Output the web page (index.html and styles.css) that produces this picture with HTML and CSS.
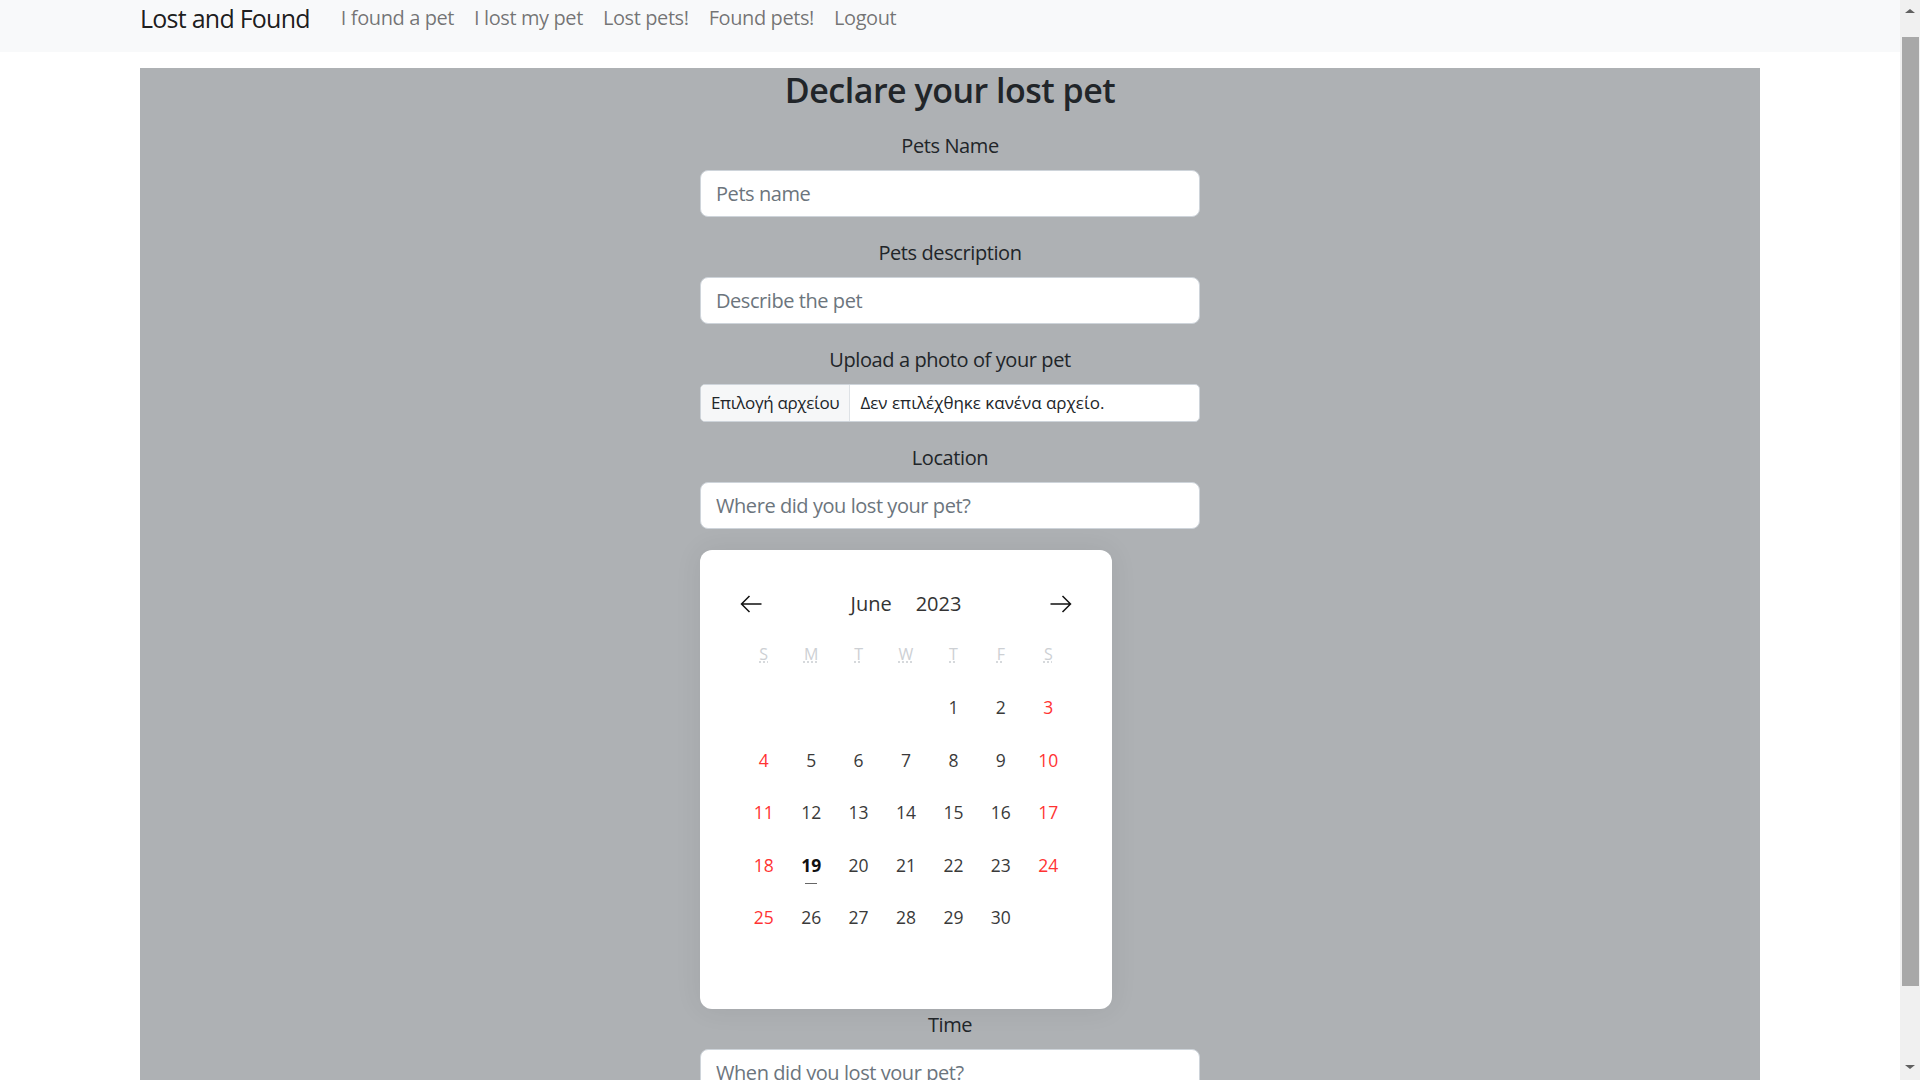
FILE: index.html
```html
<!DOCTYPE html>
<html lang="en">
<head>
<meta charset="utf-8">
<title>Lost and Found</title>
<link rel="stylesheet" href="styles.css">
</head>
<body>
<nav class="navbar">
  <a class="brand" href="#">Lost and Found</a>
  <div class="nav-links">
    <a class="nav-link" href="#">I found a pet</a>
    <a class="nav-link" href="#">I lost my pet</a>
    <a class="nav-link" href="#">Lost pets!</a>
    <a class="nav-link" href="#">Found pets!</a>
    <a class="nav-link" href="#">Logout</a>
  </div>
</nav>

<main class="main">
  <h2 class="title">Declare your lost pet</h2>
  <form class="form">
    <div class="group">
      <label class="label">Pets Name</label>
      <input class="control" type="text" placeholder="Pets name">
    </div>
    <div class="group">
      <label class="label">Pets description</label>
      <input class="control" type="text" placeholder="Describe the pet">
    </div>
    <div class="group">
      <label class="label">Upload a photo of your pet</label>
      <div class="file">
        <span class="file-btn">Επιλογή αρχείου</span>
        <span class="file-name">Δεν επιλέχθηκε κανένα αρχείο.</span>
      </div>
    </div>
    <div class="group">
      <label class="label">Location</label>
      <input class="control" type="text" placeholder="Where did you lost your pet?">
    </div>
    <div class="group group-cal">
      <div class="calendar">
        <div class="cal-head">
          <svg class="cal-arrow" width="22" height="18" viewBox="0 0 22 18"><path d="M21.5 9H1.5M9.5 1L1.5 9L9.5 17" fill="none" stroke="#111" stroke-width="1.5"/></svg>
          <div class="cal-title"><span>June</span><span>2023</span></div>
          <svg class="cal-arrow" width="22" height="18" viewBox="0 0 22 18"><path d="M0.5 9H20.5M12.5 1L20.5 9L12.5 17" fill="none" stroke="#111" stroke-width="1.5"/></svg>
        </div>
        <div class="cal-week">
          <abbr title="Sunday">S</abbr><abbr title="Monday">M</abbr><abbr title="Tuesday">T</abbr><abbr title="Wednesday">W</abbr><abbr title="Thursday">T</abbr><abbr title="Friday">F</abbr><abbr title="Saturday">S</abbr>
        </div>
        <div class="cal-days">
          <span></span><span></span><span></span><span></span>
          <span>1</span><span>2</span><span class="we">3</span>
          <span class="we">4</span><span>5</span><span>6</span><span>7</span><span>8</span><span>9</span><span class="we">10</span>
          <span class="we">11</span><span>12</span><span>13</span><span>14</span><span>15</span><span>16</span><span class="we">17</span>
          <span class="we">18</span><span class="today">19</span><span>20</span><span>21</span><span>22</span><span>23</span><span class="we">24</span>
          <span class="we">25</span><span>26</span><span>27</span><span>28</span><span>29</span><span>30</span><span></span>
        </div>
      </div>
    </div>
    <div class="group">
      <label class="label">Time</label>
      <input class="control" type="text" placeholder="When did you lost your pet?">
    </div>
  </form>
</main>

<div class="scrollbar" aria-hidden="true">
  <span class="sb-up"></span>
  <span class="sb-thumb"></span>
  <span class="sb-down"></span>
</div>
</body>
</html>
```
FILE: styles.css
```css
body {
  margin: 0;
  min-height: 1168px;
  font-family: "Open Sans", "Noto Sans", "DejaVu Sans", sans-serif;
  letter-spacing: -0.025em;
  color: #212529;
  background: #fff;
}

a {
  text-decoration: none;
}

.navbar {
  display: flex;
  align-items: flex-start;
  height: 52px;
  padding-top: 1px;
  box-sizing: border-box;
  padding-left: 140px;
  background: #f8f9fa;
}
.brand {
  font-size: 25px;
  line-height: 34px;
  margin-right: 21px;
  letter-spacing: -0.03em;
  color: rgba(0, 0, 0, 0.9);
}
.nav-links {
  display: flex;
}
.nav-link {
  font-size: 20px;
  line-height: 34px;
  padding: 0 10px;
  color: rgba(0, 0, 0, 0.55);
}

.main {
  width: 1620px;
  margin: 16px 0 0 140px;
  padding-top: 2px;
  min-height: 1097px;
  background: #aeb1b4;
}
.title {
  margin: 0 0 20px;
  text-align: center;
  font-size: 34px;
  line-height: 1.2;
  font-weight: 600;
  letter-spacing: -0.015em;
  color: #212529;
}
.form {
  width: 500px;
  margin: 0 auto;
}
.group {
  display: flex;
  flex-direction: column;
  margin-bottom: 21px;
}
.group-cal {
  margin-bottom: 1px;
}
.label {
  display: block;
  text-align: center;
  font-size: 20px;
  line-height: 30px;
  margin-bottom: 9px;
  color: #212529;
}
.control {
  box-sizing: border-box;
  width: 100%;
  height: 47px;
  padding: 0 15px;
  border: 1px solid #ced4da;
  border-radius: 8px;
  background: #fff;
  font-family: inherit;
  font-size: 20px;
  letter-spacing: -0.022em;
  color: #212529;
  outline: none;
}
.control::placeholder {
  color: #6c757d;
  opacity: 1;
}

.file {
  box-sizing: border-box;
  display: flex;
  height: 38px;
  border: 1px solid #ced4da;
  border-radius: 5px;
  background: #fff;
  overflow: hidden;
  font-size: 17px;
  letter-spacing: -0.02em;
  line-height: 36px;
  color: #212529;
}
.file-btn {
  padding: 0 10px;
  background: #f6f7f8;
  border-right: 1px solid #dee2e6;
}
.file-name {
  padding-left: 10px;
  letter-spacing: 0;
}

.calendar {
  box-sizing: border-box;
  width: 412px;
  height: 459px;
  padding: 40px;
  background: #fff;
  border-radius: 12px;
  box-shadow: 0 0 28px rgba(0, 0, 0, 0.07);
  letter-spacing: 0;
}
.cal-head {
  display: flex;
  align-items: center;
  justify-content: space-between;
  height: 28px;
}
.cal-arrow {
  display: block;
}
.cal-title {
  display: flex;
  gap: 24px;
  font-size: 20px;
  color: #333;
}
.cal-week {
  display: grid;
  grid-template-columns: repeat(7, 1fr);
  height: 34px;
  margin-top: 19px;
  align-items: center;
  text-align: center;
}
.cal-week abbr {
  font-size: 16px;
  color: #cdd0d4;
  text-decoration: underline dotted;
  text-underline-offset: 2px;
}
.cal-days {
  display: grid;
  grid-template-columns: repeat(7, 1fr);
  grid-auto-rows: 52.5px;
  margin-top: 10px;
  align-items: center;
  text-align: center;
  font-size: 17.5px;
  color: #3a3a3a;
}
.cal-days span {
  position: relative;
}
.cal-days .we {
  color: #ff3333;
}
.cal-days .today {
  font-weight: 700;
  color: #111;
}
.cal-days .today::after {
  content: "";
  position: absolute;
  left: 50%;
  bottom: -7px;
  width: 12px;
  height: 1px;
  margin-left: -6px;
  background: #666;
}

.scrollbar {
  position: fixed;
  top: 0;
  right: 0;
  width: 20px;
  height: 100vh;
  display: flex;
  flex-direction: column;
  align-items: center;
  background: #f0f0f0;
}
.sb-up {
  width: 0;
  height: 0;
  margin-top: 9px;
  border-left: 5px solid transparent;
  border-right: 5px solid transparent;
  border-bottom: 4px solid #606060;
}
.sb-thumb {
  width: 17px;
  height: 949px;
  margin-top: 24px;
  margin-left: 1px;
  background: #a8a8a8;
}
.sb-down {
  width: 0;
  height: 0;
  margin-top: auto;
  margin-bottom: 11px;
  border-left: 5px solid transparent;
  border-right: 5px solid transparent;
  border-top: 4px solid #606060;
}
```
